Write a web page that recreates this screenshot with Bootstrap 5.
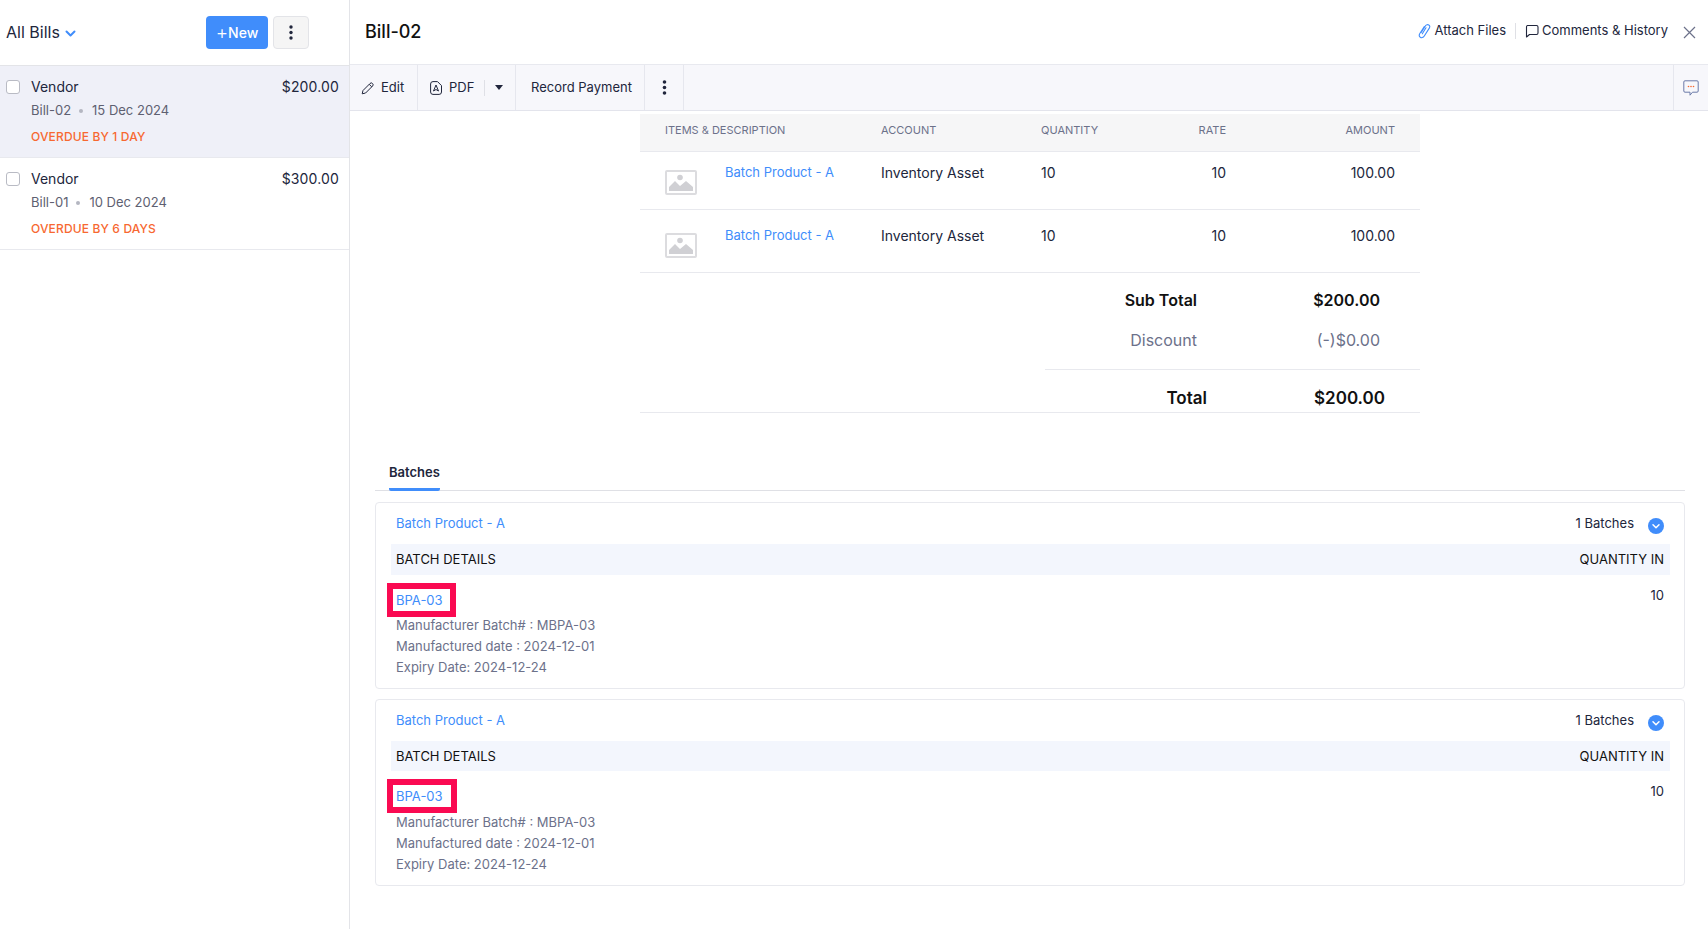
<!DOCTYPE html>
<html lang="en">
<head>
<meta charset="utf-8">
<title>Bill-02</title>
<link href="https://cdn.jsdelivr.net/npm/bootstrap@5.3.0/dist/css/bootstrap.min.css" rel="stylesheet">
<style>
html,body{height:100%;overflow:hidden}
body{font-family:Inter,"Liberation Sans",sans-serif;font-size:13px;color:#21263c;background:#fff}
a{text-decoration:none;color:#408dfb}
.shell{height:929px}
.side{width:350px;flex:none;border-right:1px solid #e3e4e8}
.side-head{height:66px;padding:16px 40px 17px 6px;border-bottom:1px solid #e3e4e8}
.side-title{font-size:16px;font-weight:400;color:#21263c;margin:2px 0 0}
.side-chev{margin:3px 0 0 5px}
.btn-new{width:62px;height:33px;padding:0;background:#408dfb;color:#fff;border:0;border-radius:4px;font-size:14px;font-weight:500;line-height:33px}
.btn-new:hover{background:#408dfb;color:#fff}
.plus{font-size:19px;font-weight:300;line-height:1;vertical-align:-1px}
.btn-kebab{width:36px;height:33px;padding:0;background:#f5f5f5;border:1px solid #e3e4e8;border-radius:4px;margin-left:5px}
.bill{height:92px;padding:11px 10px 0 6px;border-bottom:1px solid #e8e9ee}
.bill-on{background:#eff0f8}
.tick{width:14px;height:14px;border:1px solid #b9bbc4;border-radius:3px;background:#fff;margin-top:3px;margin-right:11px;flex:none}
.bill-name{font-size:14px;line-height:20px;color:#21263c}
.bill-price{letter-spacing:.15px}
.bill-meta{font-size:13px;line-height:20px;margin-top:3px;color:#5e6071}
.bill-dot{display:inline-block;width:4px;height:4px;border-radius:50%;background:#b4b6c1;margin:0 9px 2px 8px}
.bill-due{font-size:12px;font-weight:500;line-height:16px;margin-top:9px;color:#f76831;letter-spacing:.15px}
.main{width:1358px;flex:none}
.main-head{height:64px;padding:0 12px 0 15px}
.main-title{font-size:18px;font-weight:500;color:#111;margin:0}
.head-link{font-size:13px;color:#21263c;margin-top:-2px}
.head-link .ic-chat{margin-right:3px}
.head-sep{width:1px;height:16px;background:#dfe0e5;margin:-2px 9px 0 9px}
.head-x{margin-left:15px}
.bar{height:47px;background:#f7f7fb;border-top:1px solid #e8e9ef;border-bottom:1px solid #e3e4ec}
.tool{padding:0 13px;border-right:1px solid #e6e7ee;font-size:13px;color:#21263c;height:100%}
.tool-edit{width:68px;padding:0 0 0 11px}
.tool-edit svg{margin-right:6px}
.tool-pdf{width:98px;padding:0 0 0 12px}
.tool-pdf svg{margin-right:7px}
.tool-pay{width:129px;padding:0 0 0 15px}
.tool-more{width:39px;padding:0}
.tool-end{margin-left:auto;border-left:1px solid #e6e7ee;border-right:0;width:35px;padding:0;justify-content:center}
.pdf-sep{width:1px;height:16px;background:#dfe0e6;margin:0 10px}
.caret{width:0;height:0;border-left:4px solid transparent;border-right:4px solid transparent;border-top:5px solid #21263c}
.pane{padding-top:3px}
.doc{width:780px;margin-left:290px}
.items{width:780px;table-layout:fixed;margin:0;border-collapse:collapse}
.items th{height:37px;background:#f6f6f7;font-size:11px;font-weight:400;color:#6c718a;border-bottom:1px solid #e8e9ee;padding:0 0 5px;vertical-align:middle}
.items td{height:58px;padding:12px 0 0;vertical-align:top;border-bottom:1px solid #e8e9ee;font-size:14px;line-height:18px;color:#21263c}
.items .row2 td{height:63px;padding-top:17px}
.items a{font-size:13px;line-height:16px;margin-left:28px}
.pic{display:block;margin-top:6px}
.cell-first{padding-left:25px!important}
.sum{display:flex;justify-content:flex-end;font-size:16px;line-height:20px}
.sum-a{margin-top:17px;font-weight:600;color:#111}
.sum-b{margin-top:20px;color:#6c718a;padding-bottom:19px;margin-left:405px;border-bottom:1px solid #e8e9ee}
.sum-c{padding-top:18px;padding-bottom:4px;font-weight:600;color:#111;border-bottom:1px solid #e8e9ee;font-size:17px}
.sum-a .sum-val,.sum-b .sum-val{width:223px;text-align:right;padding-right:40px}
.sum-c .sum-val{width:213px;text-align:right;padding-right:35px}
.batches{margin:37px 23px 0 25px}
.tabs{height:41px;border-bottom:1px solid #dfe0e5;padding-left:14px}
.tab{display:inline-block;height:41px;width:51px;line-height:44px;font-size:13px;font-weight:600;color:#21263c;border-bottom:3px solid #408dfb;border-bottom-left-radius:2px;border-bottom-right-radius:2px;white-space:nowrap}
.bcard{height:187px;margin-top:11px;border:1px solid #e8e9ee;border-radius:4px;padding:0 14px 0 15px}
.bcard + .bcard{margin-top:10px}
.bcard-top{height:41px;padding:2px 5px 0 5px;font-size:13px;color:#21263c}
.count-ic{margin-left:14px;margin-right:1px;margin-top:3px;display:block}
.band{height:31px;background:#f3f6fd;padding:2px 6px 0 5px;font-size:13px;color:#111}
.band-short{height:30px}
.bcard-body{padding:0 6px 0 5px}
.qty{font-size:13px;padding-top:11px;color:#21263c}
.mark-box{display:inline-block;margin:8px 0 0 -9px;padding:0 7px 0 3px;line-height:22px;border:6px solid #fa0a52;font-size:13px}
.mark-wide{padding-right:8px}
.lines{color:#6c718a;font-size:13px;line-height:21px;margin-top:-2px}
.mark-wide + .lines{margin-top:-1px}
</style>
</head>
<body>
<div class="shell d-flex">
  <aside class="side">
    <div class="side-head d-flex align-items-center">
      <h2 class="side-title">All Bills</h2>
      <svg class="side-chev" width="11" height="8" viewBox="0 0 11 8"><path d="M1.500 1.500 5.500 5.500l4-4" fill="none" stroke="#408dfb" stroke-width="2" stroke-linecap="round" stroke-linejoin="round"/></svg>
      <button class="btn btn-new ms-auto" type="button"><span class="plus">+</span>New</button>
      <button class="btn btn-kebab d-flex align-items-center justify-content-center" type="button" aria-label="More">
        <svg width="4" height="15" viewBox="0 0 4 15"><circle cx="2" cy="2" r="1.700" fill="#21263c"/><circle cx="2" cy="7.500" r="1.700" fill="#21263c"/><circle cx="2" cy="13" r="1.700" fill="#21263c"/></svg>
      </button>
    </div>
    <div class="bill bill-on d-flex">
      <span class="tick"></span>
      <div class="flex-grow-1">
        <div class="d-flex justify-content-between bill-name"><span>Vendor</span><span class="bill-price">$200.00</span></div>
        <div class="bill-meta">Bill-02<span class="bill-dot"></span>15 Dec 2024</div>
        <div class="bill-due">OVERDUE BY 1 DAY</div>
      </div>
    </div>
    <div class="bill d-flex">
      <span class="tick"></span>
      <div class="flex-grow-1">
        <div class="d-flex justify-content-between bill-name"><span>Vendor</span><span class="bill-price">$300.00</span></div>
        <div class="bill-meta">Bill-01<span class="bill-dot"></span>10 Dec 2024</div>
        <div class="bill-due">OVERDUE BY 6 DAYS</div>
      </div>
    </div>
  </aside>
  <main class="main">
    <div class="main-head d-flex align-items-center">
      <h1 class="main-title">Bill-02</h1>
      <a class="head-link d-flex align-items-center ms-auto" href="#">
        <svg class="me-1" width="13" height="16" viewBox="0 0 13 16"><path d="M3.200 9.500 7.500 2.800c.8-1.200 2.300-1.500 3.300-.8s1.200 2 .5 3.100l-5 7.900c-1.100 1.700-2.800 2.100-4 1.300S.9 12 2 10.300L6.300 3.600M8 4.800l-3.700 6" fill="none" stroke="#408dfb" stroke-width="1.100" stroke-linecap="round"/></svg>Attach Files</a>
      <span class="head-sep"></span>
      <a class="head-link d-flex align-items-center" href="#">
        <svg class="ic-chat" width="14" height="14" viewBox="0 0 14 14"><path d="M2.500 1.500h9a1.500 1.500 0 0 1 1.500 1.500v6a1.500 1.500 0 0 1-1.500 1.500H4.500L1.500 13V3a1.500 1.500 0 0 1 1-1.500z" fill="none" stroke="#21263c" stroke-width="1.100" stroke-linejoin="round"/></svg>Comments &amp; History</a>
      <svg class="head-x" width="13" height="13" viewBox="0 0 13 13"><path d="M1 1l11 11M12 1 1 12" stroke="#6c718a" stroke-width="1.200" fill="none"/></svg>
    </div>
    <div class="bar d-flex align-items-center">
      <div class="tool tool-edit d-flex align-items-center">
        <svg width="14" height="14" viewBox="0 0 14 14"><path d="M1.200 12.800l.8-3.300 7-7a1.700 1.700 0 0 1 2.500 0l.1.100a1.700 1.700 0 0 1 0 2.400l-7 7zM8.200 3.300l2.600 2.600" fill="none" stroke="#21263c" stroke-width="1" stroke-linejoin="round"/></svg>Edit</div>
      <div class="tool tool-pdf d-flex align-items-center">
        <svg width="12" height="14" viewBox="0 0 12 14"><path d="M3 .6h4.500l4 4V11a2.400 2.400 0 0 1-2.400 2.400H3A2.400 2.400 0 0 1 .6 11V3A2.400 2.400 0 0 1 3 .6z" fill="none" stroke="#21263c" stroke-width="1"/><path d="M6 4 3.500 10 6 8.500 8.500 10z" fill="none" stroke="#21263c" stroke-width="1" stroke-linejoin="round"/></svg>PDF<span class="pdf-sep"></span><span class="caret"></span></div>
      <div class="tool tool-pay d-flex align-items-center">Record Payment</div>
      <div class="tool tool-more d-flex align-items-center justify-content-center">
        <svg width="5" height="15" viewBox="0 0 5 15"><circle cx="2.500" cy="2" r="1.800" fill="#21263c"/><circle cx="2.500" cy="7.500" r="1.800" fill="#21263c"/><circle cx="2.500" cy="13" r="1.800" fill="#21263c"/></svg>
      </div>
      <div class="tool tool-end d-flex align-items-center">
        <svg width="16" height="16" viewBox="0 0 16 16"><path d="M2 .8h12A1.200 1.200 0 0 1 15.200 2v9a1.200 1.200 0 0 1-1.200 1.200H9.500l-2.500 3v-3H2A1.200 1.200 0 0 1 .8 11V2A1.200 1.200 0 0 1 2 .8z" fill="none" stroke="#6b7aa8" stroke-width="1"/><circle cx="5.500" cy="6.500" r=".8" fill="#f76831"/><circle cx="8" cy="6.500" r=".8" fill="#f76831"/><circle cx="10.500" cy="6.500" r=".8" fill="#f76831"/></svg>
      </div>
    </div>
    <div class="pane">
      <div class="doc">
        <table class="items">
          <colgroup><col style="width:241px"><col style="width:160px"><col style="width:80px"><col style="width:105px"><col style="width:169px"><col style="width:25px"></colgroup>
          <thead><tr>
            <th class="cell-first">ITEMS &amp; DESCRIPTION</th><th>ACCOUNT</th><th>QUANTITY</th><th class="text-end">RATE</th><th class="text-end">AMOUNT</th><th></th>
          </tr></thead>
          <tbody>
            <tr>
              <td class="cell-first"><div class="d-flex"><svg class="pic" width="32" height="25" viewBox="0 0 32 25"><rect x="1" y="1" width="30" height="23" fill="#fff" stroke="#dcdcdf" stroke-width="2" rx="1"/><circle cx="15" cy="7.500" r="2.800" fill="#d0d0d4"/><path d="M4 21V17l6-6 5 5 6-5 7 6v4z" fill="#d0d0d4"/></svg><a href="#">Batch Product - A</a></div></td>
              <td>Inventory Asset</td><td>10</td><td class="text-end">10</td><td class="text-end">100.00</td><td></td>
            </tr>
            <tr class="row2">
              <td class="cell-first"><div class="d-flex"><svg class="pic" width="32" height="25" viewBox="0 0 32 25"><rect x="1" y="1" width="30" height="23" fill="#fff" stroke="#dcdcdf" stroke-width="2" rx="1"/><circle cx="15" cy="7.500" r="2.800" fill="#d0d0d4"/><path d="M4 21V17l6-6 5 5 6-5 7 6v4z" fill="#d0d0d4"/></svg><a href="#">Batch Product - A</a></div></td>
              <td>Inventory Asset</td><td>10</td><td class="text-end">10</td><td class="text-end">100.00</td><td></td>
            </tr>
          </tbody>
        </table>
        <div class="sum sum-a"><span>Sub Total</span><span class="sum-val">$200.00</span></div>
        <div class="sum sum-b"><span>Discount</span><span class="sum-val">(-)$0.00</span></div>
        <div class="sum sum-c"><span>Total</span><span class="sum-val">$200.00</span></div>
      </div>
      <section class="batches">
        <div class="tabs"><span class="tab">Batches</span></div>
        <div class="bcard">
          <div class="bcard-top d-flex align-items-center justify-content-between"><a href="#">Batch Product - A</a><span class="d-flex align-items-center">1 Batches<svg class="count-ic" width="16" height="16" viewBox="0 0 16 16"><circle cx="8" cy="8" r="8" fill="#408dfb"/><path d="M5 6.800 8 9.800l3-3" fill="none" stroke="#fff" stroke-width="1.500" stroke-linecap="round" stroke-linejoin="round"/></svg></span></div>
          <div class="band d-flex align-items-center justify-content-between"><span>BATCH DETAILS</span><span>QUANTITY IN</span></div>
          <div class="bcard-body d-flex justify-content-between">
            <div><a href="#" class="mark-box">BPA-03</a>
              <div class="lines"><div>Manufacturer Batch# : MBPA-03</div><div>Manufactured date : 2024-12-01</div><div>Expiry Date: 2024-12-24</div></div>
            </div>
            <div class="qty">10</div>
          </div>
        </div>
        <div class="bcard">
          <div class="bcard-top d-flex align-items-center justify-content-between"><a href="#">Batch Product - A</a><span class="d-flex align-items-center">1 Batches<svg class="count-ic" width="16" height="16" viewBox="0 0 16 16"><circle cx="8" cy="8" r="8" fill="#408dfb"/><path d="M5 6.800 8 9.800l3-3" fill="none" stroke="#fff" stroke-width="1.500" stroke-linecap="round" stroke-linejoin="round"/></svg></span></div>
          <div class="band band-short d-flex align-items-center justify-content-between"><span>BATCH DETAILS</span><span>QUANTITY IN</span></div>
          <div class="bcard-body d-flex justify-content-between">
            <div><a href="#" class="mark-box mark-wide">BPA-03</a>
              <div class="lines"><div>Manufacturer Batch# : MBPA-03</div><div>Manufactured date : 2024-12-01</div><div>Expiry Date: 2024-12-24</div></div>
            </div>
            <div class="qty">10</div>
          </div>
        </div>
      </section>
    </div>
  </main>
</div>
<script src="https://cdn.jsdelivr.net/npm/bootstrap@5.3.0/dist/js/bootstrap.bundle.min.js"></script>
</body>
</html>
